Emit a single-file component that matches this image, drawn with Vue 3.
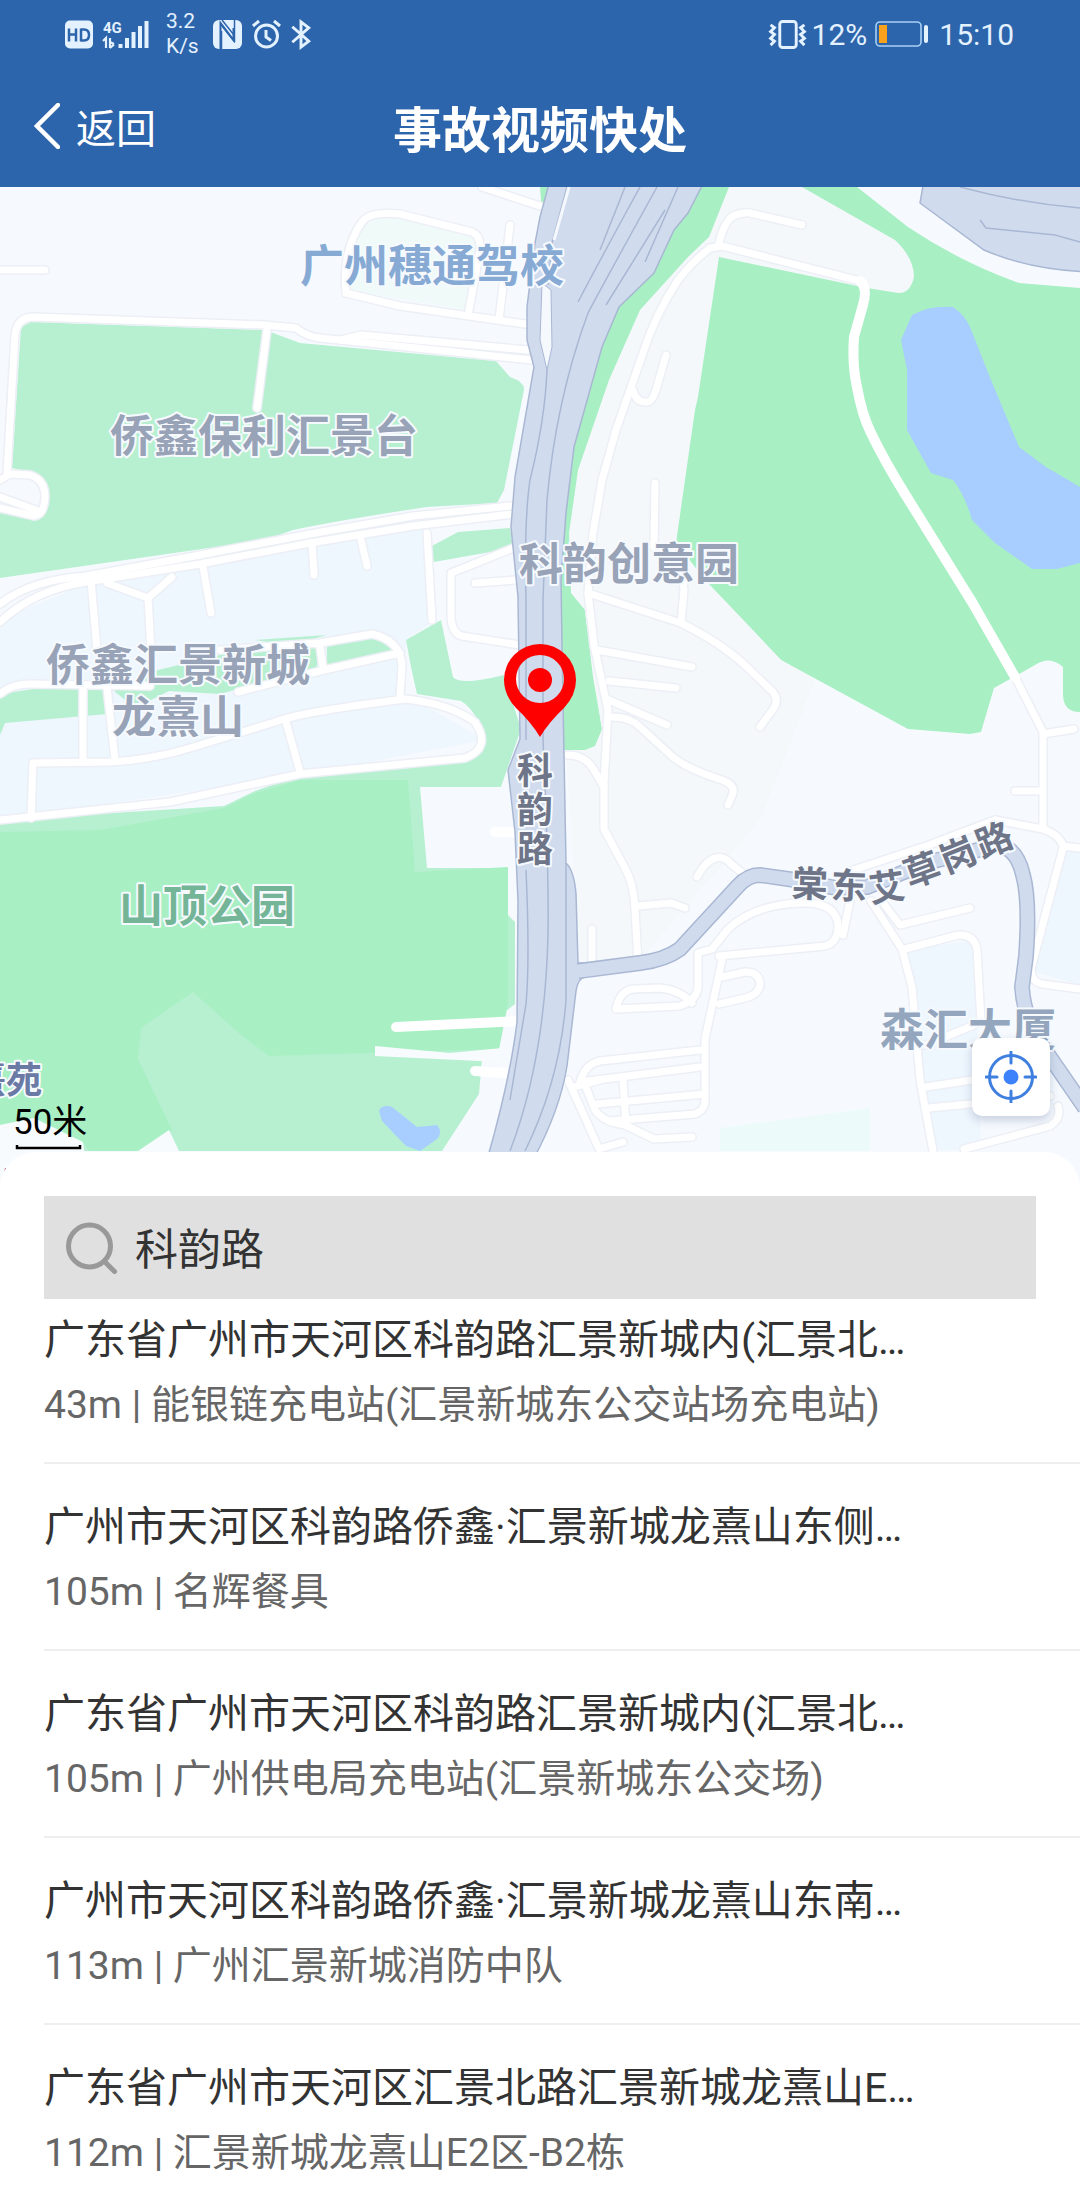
<script setup>
import { ref } from 'vue'

const keyword = ref('科韵路')

const places = [
  { address: '广东省广州市天河区科韵路汇景新城内(汇景北…', distance: '43m', name: '能银链充电站(汇景新城东公交站场充电站)' },
  { address: '广州市天河区科韵路侨鑫·汇景新城龙熹山东侧…', distance: '105m', name: '名辉餐具' },
  { address: '广东省广州市天河区科韵路汇景新城内(汇景北…', distance: '105m', name: '广州供电局充电站(汇景新城东公交场)' },
  { address: '广州市天河区科韵路侨鑫·汇景新城龙熹山东南…', distance: '113m', name: '广州汇景新城消防中队' },
  { address: '广东省广州市天河区汇景北路汇景新城龙熹山E…', distance: '112m', name: '汇景新城龙熹山E2区-B2栋' },
]

const labels = [
  { text: '广州穗通驾校', x: 300, y: 282, kind: 'school' },
  { text: '侨鑫保利汇景台', x: 110, y: 452, kind: 'estate' },
  { text: '科韵创意园', x: 519, y: 580, kind: 'estate' },
  { text: '侨鑫汇景新城', x: 46, y: 681, kind: 'estate' },
  { text: '龙熹山', x: 112, y: 733, kind: 'estate' },
  { text: '山顶公园', x: 119, y: 922, kind: 'park' },
  { text: '森汇大厦', x: 880, y: 1046, kind: 'tower' },
]

// road names are set one character at a time along the road
const roadChars = [
  { c: '科', x: 535, y: 771, r: 0 },
  { c: '韵', x: 535, y: 810, r: 0 },
  { c: '路', x: 535, y: 849, r: 0 },
  { c: '棠', x: 810, y: 884, r: 2 },
  { c: '东', x: 849, y: 886, r: 2 },
  { c: '艾', x: 887, y: 887, r: -8 },
  { c: '草', x: 922, y: 870, r: -20 },
  { c: '岗', x: 958, y: 855, r: -22 },
  { c: '路', x: 994, y: 840, r: -22 },
]

const lanes = [
  'M0 270H45',
  'M482 187L540 206',
  'M7 472L15 335Q17 317 34 317L265 325L296 328Q305 336 320 338L532 360',
  'M341 340L361 335L528 350',
  'M267 330L257 408',
  'M0 480L10 474L30 475Q45 480 45 497Q44 515 34 516L0 508',
  'M0 497L36 510',
  'M346 293Q342 250 362 222Q370 211 400 214L472 232Q481 236 480 250L469 310',
  'M346 293L400 306L525 324',
  'M510 225L499 320',
  'M0 604Q30 580 86 576L200 555L310 534L413 516L510 506',
  'M0 622Q34 590 86 582L200 564L310 543L413 526L513 514',
  'M91 580L97 650',
  'M203 567L211 613',
  'M312 543L314 575',
  'M361 540L367 566',
  'M427 533L432 620',
  'M107 583L148 598L172 577M148 597L151 650',
  'M516 547L451 573V610Q450 633 462 636L520 645M475 583L516 580',
  'M0 694Q12 684 30 684L150 686',
  'M83 688V762M107 688L115 760',
  'M31 818L33 763L110 762Q150 760 190 748L275 722Q300 712 406 699Q450 704 475 722Q492 748 465 758L300 774L170 802L0 820',
  'M286 722L300 772',
  'M238 692L324 670L400 653M400 697L402 665Q400 640 372 634L320 643L220 650M320 647L323 667',
  'M860 281L722 246L710 248Q692 262 678 280Q655 315 643 353L616 430L602 480L593 533L588 593L594 645L608 710L604 784V829L626 870Q634 885 635 910L638 962',
  'M719 243Q724 222 733 216Q742 212 750 213L802 225',
  'M633 390Q636 403 647 402Q652 402 656 390L666 355',
  'M655 483L654 547',
  'M588 593L681 623Q725 645 750 670L773 692Q779 700 774 708L760 727M681 623L684 590Q684 580 674 570',
  'M597 650L692 667M609 681L676 688M609 700L667 725',
  'M612 717Q630 717 640 727L674 758Q690 770 722 780Q735 785 733 793L728 805',
  'M568 755Q585 755 594 770L604 787',
  'M638 906L671 903L685 908M592 929V963',
  'M1015 677L1043 732V827M1043 734L1074 729M1015 791H1043',
  'M853 870L929 845L995 820L1043 829Q1060 835 1063 846L1080 848',
  'M1063 848L1032 965Q1028 980 1042 984L1080 989',
  'M697 877Q706 860 716 858Q724 856 730 863L747 877',
  'M719 956L825 946Q838 943 838 925Q836 902 802 903Q755 904 728 929L712 949L698 953V985Q698 1000 680 1006L616 1009Q620 990 634 989L660 988Q680 990 692 1003',
  'M850 901L843 935',
  'M722 960L705 1039V1100Q705 1110 695 1114L609 1121',
  'M722 977L745 972Q760 972 760 985Q758 995 745 998L719 1004',
  'M871 901L902 949L912 987L920 1080L933 1151',
  'M884 904L900 925L970 908M905 949L958 935Q974 934 977 949L981 1022L926 1045',
  'M700 1050L600 1061Q585 1064 580 1082L700 1067',
  'M574 1087L600 1080M585 1085L595 1110Q603 1122 625 1125L654 1139L692 1137',
  'M623 1080L626 1125M597 1104L705 1094M568 1080L599 1149L623 1142',
  'M926 1087L972 1080M929 1108L1050 1096M964 1149L1050 1126Q1062 1118 1058 1106',
]
</script>

<template>
  <div class="page">
    <header class="top">
      <div class="status">
        <div class="status-left">
          <svg class="glyph hd" viewBox="0 0 28 28">
            <rect width="28" height="28" rx="5" fill="#e4f1ff" />
            <path d="M4 8v13M11 8v13M4 14h7M16 8v13M16 9h3q5 0 5 5.500t-5 5.500h-3" fill="none" stroke="#2c65ab" stroke-width="2.500" />
          </svg>
          <svg class="glyph signal" viewBox="0 0 46 29">
            <text class="net" x="0" y="13">4G</text>
            <path d="M0 21l3-3v10M7 18v10M7 28l4-3.500M7 22l4 2" fill="none" stroke="#e4f1ff" stroke-width="2.200" />
            <path d="M17.500 24v4M24 18v10M30.500 12v16M37 6v22M43.500 1v27" stroke="#e4f1ff" stroke-width="4" />
          </svg>
          <div class="speed"><span>3.2</span><span>K/s</span></div>
          <svg class="glyph nfc" viewBox="0 0 29 29">
            <rect width="29" height="29" rx="6" fill="#e4f1ff" />
            <path d="M7.500 29V3l13 17V8" fill="none" stroke="#2c65ab" stroke-width="2" />
            <path d="M9 0l12 15v6L9 6M21.500 0v22M8.500 11v18" fill="none" stroke="#2c65ab" stroke-width="1.500" />
          </svg>
          <svg class="glyph alarm" viewBox="0 0 29 29">
            <circle cx="14.500" cy="16" r="11" fill="none" stroke="#e4f1ff" stroke-width="3" />
            <path d="M14 10v7l5 3.500M1 6l6-5M28 6l-6-5" fill="none" stroke="#e4f1ff" stroke-width="3" />
          </svg>
          <svg class="glyph bt" viewBox="0 0 20 30">
            <path d="M1 7l17 15-8 6V2l8 6L1 23" fill="none" stroke="#e4f1ff" stroke-width="3" />
          </svg>
        </div>
        <div class="status-right">
          <svg class="glyph vibrate" viewBox="0 0 38 30">
            <rect x="10.500" y="1.500" width="17" height="27" rx="3" fill="none" stroke="#e4f1ff" stroke-width="3" />
            <path d="M1 5l4 3-4 4 4 3-4 4 4 3-4 4M36 5l-4 3 4 4-4 3 4 4-4 3 4 4" fill="none" stroke="#e4f1ff" stroke-width="3" />
          </svg>
          <span class="percent">12%</span>
          <svg class="glyph battery" viewBox="0 0 54 26">
            <rect x="1" y="1" width="45" height="24" rx="4" fill="none" stroke="#a9d0f5" stroke-width="1.600" />
            <rect x="4" y="4" width="8" height="18" fill="#f7a11c" />
            <path d="M51 6v14" stroke="#e4f1ff" stroke-width="4" stroke-linecap="round" />
          </svg>
          <span class="clock">15:10</span>
        </div>
      </div>
      <nav class="nav">
        <a class="back" href="#">
          <svg class="chevron" viewBox="0 0 26 46">
            <path d="M24 2L3 23l21 21" fill="none" stroke="#fff" stroke-width="4.500" stroke-linecap="round" />
          </svg>
          返回
        </a>
        <h1>事故视频快处</h1>
      </nav>
    </header>

    <section class="map">
      <svg class="canvas" viewBox="0 187 1080 1000" role="img" aria-label="地图">
        <rect y="187" width="1080" height="1000" fill="#f6faff" />

        <!-- building blocks -->
        <g fill="#eef6fe">
          <path d="M0 620L90 582L430 526L436 620L406 640V695L485 740L300 775L0 820Z" />
          <path d="M905 950L975 940L981 1150H935Z" />
          <path d="M1063 850H1080V985L1035 972Z" />
        </g>
        <path d="M346 290Q344 215 400 214L480 236L469 310Z" fill="#f0faf9" />
        <path d="M720 1128L870 1108V1151H720Z" fill="#edfafa" />
        <path d="M593 610L700 590L815 680L760 820L640 960L580 960L566 750Z" fill="#f4f8fb" />

        <!-- parks -->
        <g fill="#b7f0d0">
          <path d="M21 327L31 322L265 330L300 343L496 361L510 377Q525 382 524 390L504 490L497 503L427 507Q340 520 293 530L265 540L0 578V513L34 518L45 497L34 473L12 468Z" />
          <path d="M430 547L458 532L510 528L513 548L434 562Z" />
          <path d="M406 640L441 620L453 677Q460 686 504 675L521 729L501 787H420L427 868H508V915L515 922V1004L506 1011L499 1049L482 1059L479 1094L442 1151H0V820L224 806L255 791L300 775L465 760Q490 750 479 722Q470 706 461 701L417 694L411 667Z" />
          <path d="M0 694L40 688L79 689H107V714L5 723L0 735Z" />
          <path d="M114 691L158 670L220 655L317 647V667L220 694L169 691L135 708Z" />
          <path d="M255 640L327 635L290 645ZM327 647L372 635L393 650L327 667Z" />
        </g>
        <g fill="#a8efc4">
          <path d="M0 832L100 830L224 808L255 793L300 780L408 780L415 872L508 867V1004L499 1049L269 1056L241 1035L193 992L141 1028L138 1059L172 1130L138 1151H89L83 1142L34 1118L0 1125Z" />
          <path d="M540 187H857L908 227Q960 262 1019 283L1080 288V712Q1063 712 1063 694V667Q1050 655 1035 665L994 688L981 732L970 734L908 729L781 660L705 580L676 543H575L602 729L595 746L585 750H556V400Z" />
        </g>
        <path d="M571 593L569 533L578 470L609 380L640 310L688 257L709 237L729 187H802L895 240Q914 258 914 277Q910 294 898 293L867 288L719 257L698 397L695 410L676 543L705 580L781 660L815 680L700 700L602 729L593 677L585 610Z" fill="#f4f8fb" />
        <path d="M0 1125L34 1118L83 1142L89 1190H0ZM138 1151L169 1130L179 1151ZM375 1046L450 1053L502 1048L500 1062L375 1056Z" fill="#f8fbfe" />

        <!-- water -->
        <g fill="#a8ceff">
          <path d="M912 315Q930 305 953 307Q965 315 970 327L991 380L1019 447L1046 467L1080 487V563L1057 569H1032L995 543L972 520Q965 495 953 480L931 473L907 430V370L901 340Z" />
          <path d="M379 1111Q382 1104 392 1107L417 1127L437 1125Q443 1132 437 1139L420 1151L406 1146L382 1121Z" />
        </g>

        <g class="lane-edge"><path v-for="d in lanes" :key="d" :d="d" /></g>
        <g class="lane"><path v-for="d in lanes" :key="d" :d="d" /></g>
        <path class="lane wide" d="M860 281Q868 288 863 305L854 337Q852 365 857 387Q862 415 871 433Q885 462 905 494L972 602L1015 677M396 1027L518 1021M475 1071L506 1073M495 832H516" />

        <!-- highways -->
        <g fill="#d0dcee" stroke="#a9b7d3" stroke-width="1.500">
          <path d="M550 180L540 217L535 243L527 307V340L534 367L515 477L511 527L518 597L520 739L508 770L515 832L518 901L517 1022Q510 1080 487 1160H533Q560 1110 567 1066L576 991Q578 978 585 977V963L578 963L576 894Q574 870 566 863L562 647L561 580L566 513L574 447L602 347L619 307L654 273L674 230L688 213L705 180Z" />
          <path d="M924 180L920 203L984 250Q1030 270 1090 272V180Z" />
        </g>
        <path d="M542 283L551 290L552 347L547 370L540 340Z" fill="#f5f9fe" stroke="#a9b7d3" />
        <g fill="none" stroke="#a9b7d3" stroke-width="1.500">
          <path d="M567 187L552 243L548 285M547 370Q545 420 530 480Q524 520 526 600V740M657 187Q600 290 588 313Q556 400 547 500L543 600V740Q549 870 548 935Q545 1060 510 1151" />
          <path d="M640 187Q600 260 578 302M625 187L600 250M678 187L645 262M665 210L606 305M526 870Q530 960 526 1004L510 1100M566 863V1000Q560 1080 525 1151" />
          <path d="M960 187Q1020 203 1080 208M980 220L986 228L1055 235L1080 242" />
        </g>
        <path d="M569 187L554 240" fill="none" stroke="#f5f9fe" stroke-width="3" />
        <g fill="none">
          <path class="avenue-edge" d="M578 971L640 963Q665 960 680 949L738 886Q748 875 760 875L795 880L836 888L867 887L926 863L998 845Q1017 848 1023 875Q1030 900 1026 956L1022 987Q1024 1020 1045 1050L1085 1108" />
          <path class="avenue" d="M572 972L640 963Q665 960 680 949L738 886Q748 875 760 875L795 880L836 888L867 887L926 863L998 845Q1017 848 1023 875Q1030 900 1026 956L1022 987Q1024 1020 1045 1050L1085 1108" />
        </g>

        <text v-for="l in labels" :key="l.text" class="label" :class="l.kind" :x="l.x" :y="l.y">{{ l.text }}</text>
        <text
          v-for="g in roadChars"
          :key="g.c + g.x"
          class="label road"
          text-anchor="middle"
          :transform="`translate(${g.x} ${g.y}) rotate(${g.r})`"
          y="13"
        >{{ g.c }}</text>
        <text class="label poi" x="42" y="1093" text-anchor="end">熹苑</text>

        <text class="scale" x="13" y="1134">50米</text>
        <path d="M17 1145v3h63v-3" fill="none" stroke="#000" stroke-width="2.500" />

        <path d="M4 1174l1-6 4 0z" fill="#b0526a" />

        <!-- current position -->
        <path fill="#fe0000" fill-rule="evenodd" d="M540 737Q531 722 516 708Q504 695 504 680A36 36 0 0 1 576 680Q576 695 564 708Q549 722 540 737ZM540 655A24 24 0 1 0 540 703A24 24 0 1 0 540 655Z" />
        <circle cx="540" cy="680" r="12" fill="#fe0000" />
      </svg>
      <button class="locate" type="button" aria-label="定位">
        <svg viewBox="0 0 52 52">
          <circle cx="26" cy="26" r="21.500" fill="none" stroke="#3f7fe0" stroke-width="3" />
          <circle cx="26" cy="26" r="7.500" fill="#3d82fb" />
          <path d="M26 1v11M26 40v11M1 26h11M40 26h11" stroke="#3f7fe0" stroke-width="3" stroke-linecap="round" />
        </svg>
      </button>
    </section>

    <main class="sheet">
      <label class="search">
        <svg class="lens" viewBox="0 0 52 52">
          <circle cx="23.500" cy="24" r="21" fill="none" stroke="#999" stroke-width="5" />
          <path d="M39 40l9.500 9.500" stroke="#999" stroke-width="5" stroke-linecap="round" />
        </svg>
        <input v-model="keyword" type="text" aria-label="搜索地点">
      </label>
      <ul class="places">
        <li v-for="(place, i) in places" :key="i">
          <button class="place" type="button">
            <span class="address">{{ place.address }}</span>
            <span class="detail">{{ place.distance }} | {{ place.name }}</span>
          </button>
        </li>
      </ul>
    </main>
  </div>
</template>

<style>
body {
  margin: 0;
  background: #fff;
}
</style>

<style scoped>
.page {
  font-family: Roboto, "Noto Sans CJK SC", sans-serif;
  color: #333;
  background: #fff;
}

.top {
  color: #fff;
  background: #2c65ab;
}

.status {
  display: flex;
  justify-content: space-between;
  align-items: center;
  height: 68px;
  padding: 0 66px 0 65px;
  color: #e4f1ff;
  font-size: 30px;
}

.status-left,
.status-right {
  display: flex;
  align-items: center;
}

.glyph {
  display: block;
  flex: none;
  height: 29px;
  overflow: visible;
}

.hd {
  width: 28px;
  margin-right: 10px;
}

.signal {
  width: 46px;
  margin-right: 17px;
}

.net {
  font-size: 15px;
  font-weight: 700;
  fill: #e4f1ff;
}

.speed {
  display: flex;
  flex-direction: column;
  width: 32px;
  margin-right: 15px;
  font-size: 21px;
  line-height: 25px;
}

.nfc,
.alarm {
  width: 29px;
  margin-right: 10px;
}

.bt {
  width: 20px;
}

.vibrate {
  width: 38px;
  margin-right: 5px;
}

.battery {
  width: 54px;
  height: 26px;
  margin: 0 10px 0 8px;
}

.nav {
  display: grid;
  grid-template-columns: 1fr auto 1fr;
  align-items: center;
  height: 116px;
  padding: 0 34px 3px;
}

.back {
  display: flex;
  align-items: center;
  gap: 16px;
  color: inherit;
  font-size: 40px;
  text-decoration: none;
}

.chevron {
  width: 26px;
  height: 46px;
}

h1 {
  margin: 0;
  font-size: 49px;
  font-weight: 700;
}

.map {
  position: relative;
}

.canvas {
  display: block;
  width: 100%;
}

.lane,
.lane-edge {
  fill: none;
  stroke: #fff;
  stroke-width: 7;
  stroke-linecap: round;
  stroke-linejoin: round;
}

.lane-edge {
  stroke: #eceff5;
  stroke-width: 10;
}

.wide {
  stroke-width: 10;
}

.avenue-edge {
  stroke: #a9b7d3;
  stroke-width: 16;
}

.avenue {
  stroke: #d0dcee;
  stroke-width: 13;
}

.label {
  font-size: 44px;
  font-weight: 700;
  stroke: #f6fafe;
  stroke-width: 4px;
  stroke-linejoin: round;
  paint-order: stroke;
}

.school {
  fill: #87aad4;
}

.estate {
  fill: #98a3b8;
}

.park {
  fill: #74b598;
}

.tower {
  fill: #94a6bd;
}

.road {
  font-size: 36px;
  fill: #6f7588;
}

.poi {
  font-size: 36px;
  fill: #6a7aa5;
}

.scale {
  font-size: 35px;
  fill: #000;
}

.locate {
  position: absolute;
  right: 30px;
  bottom: 71px;
  display: grid;
  place-items: center;
  width: 78px;
  height: 78px;
  padding: 0;
  border: 0;
  border-radius: 10px;
  background: #fff;
  box-shadow: 0 4px 10px rgba(60, 80, 120, 0.25);
}

.locate svg {
  width: 52px;
  height: 52px;
}

.sheet {
  position: relative;
  margin-top: -35px;
  padding: 44px 0 0 44px;
  border-radius: 36px 36px 0 0;
  background: #fff;
}

.search {
  display: flex;
  align-items: center;
  gap: 17px;
  height: 103px;
  margin-right: 44px;
  padding: 0 22px;
  background: #e0e0e0;
}

.lens {
  flex: none;
  width: 52px;
  height: 52px;
}

.search input {
  flex: 1;
  min-width: 0;
  padding: 0 0 4px;
  border: 0;
  outline: 0;
  background: none;
  color: #333;
  font: inherit;
  font-size: 43px;
}

.places {
  margin: 0;
  padding: 0;
  list-style: none;
}

.places li {
  padding: 34px 0 28px;
  border-bottom: 2px solid #eee;
}

.places li:first-child {
  padding-top: 12px;
}

.places li:last-child {
  padding-bottom: 24px;
  border-bottom: 0;
}

.place {
  display: flex;
  flex-direction: column;
  gap: 7px;
  width: 100%;
  padding: 0;
  border: 0;
  background: none;
  color: inherit;
  font: inherit;
  text-align: left;
  white-space: nowrap;
}

.address {
  font-size: 41px;
  line-height: 58px;
}

.detail {
  color: #666;
  font-size: 39px;
  line-height: 58px;
}
</style>
